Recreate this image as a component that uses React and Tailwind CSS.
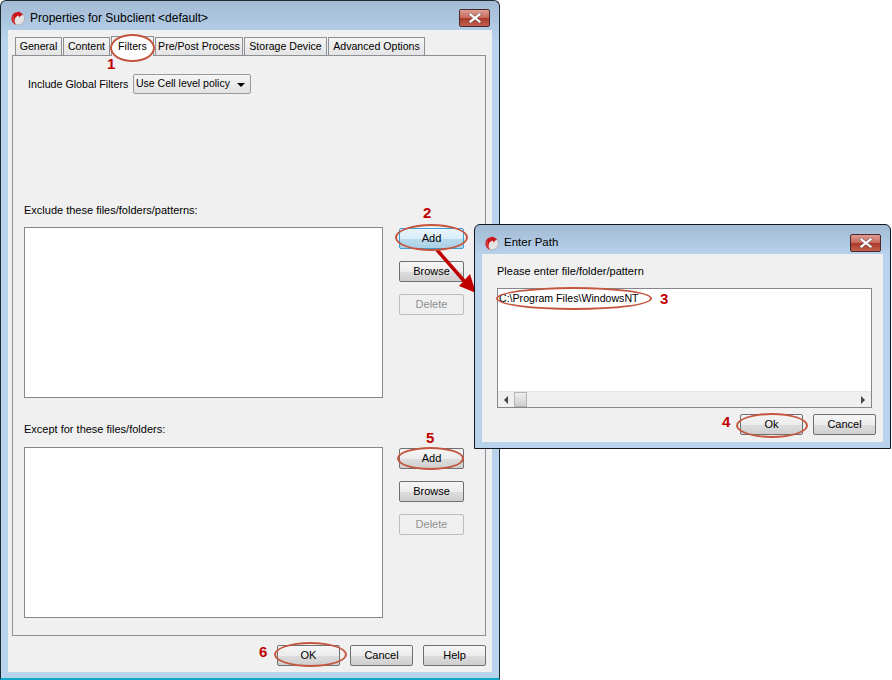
const font = { fontFamily: '"Liberation Sans", sans-serif' };

function Logo({ className }) {
  return (
    <svg viewBox="0 0 16 16" className={className}>
      <circle cx="8" cy="8.5" r="6.5" fill="#e4e4e4" stroke="#9a9a9a" strokeWidth="0.6" />
      <path d="M8 2 A6.5 6.5 0 0 0 6 14.7 C3.5 11 4.5 6.5 9 5.5 L9 7.5 L13 4.2 L9 1.8 Z" fill="#c8141c" />
      <path d="M3 6 C3 8 3 11 5 13" stroke="#e85a50" strokeWidth="1" fill="none" />
    </svg>
  );
}

function CloseButton() {
  return (
    <div className="w-[31px] h-[18px] rounded-[2px] border border-[#4a2a28] bg-[linear-gradient(to_bottom,#dc9d93_0%,#c9695c_48%,#a93a2c_52%,#c4604f_100%)] flex items-center justify-center">
      <svg viewBox="0 0 14 10" className="w-[14px] h-[10px]">
        <path d="M2.5 1.5 L11.5 8.5 M11.5 1.5 L2.5 8.5" stroke="#50504f" strokeWidth="3.4" strokeLinecap="square" opacity="0.6" />
        <path d="M2.5 1.5 L11.5 8.5 M11.5 1.5 L2.5 8.5" stroke="#ffffff" strokeWidth="2.2" strokeLinecap="square" />
      </svg>
    </div>
  );
}

function Button({ children, disabled, focused, className = "" }) {
  return (
    <div
      className={`h-[21px] rounded-[2px] border flex items-center justify-center text-[11px] ${
        disabled
          ? "border-[#bdbdbd] bg-[#f0f0f0] text-[#8f8f8f]"
          : focused
          ? "border-[#3c9fd6] bg-[linear-gradient(to_bottom,#eaf6fc_0%,#d8edf8_50%,#bcdcee_52%,#a9d0e6_100%)] text-black"
          : "border-[#707070] bg-[linear-gradient(to_bottom,#f5f5f5_0%,#ececec_50%,#dcdcdc_55%,#cfcfcf_100%)] text-black"
      } ${className}`}
    >
      {children}
    </div>
  );
}

function Tab({ children, width, active }) {
  return (
    <div
      className={`border border-b-0 border-[#8e8f94] flex items-center justify-center text-[10.6px] whitespace-nowrap text-black ${
        active ? "relative z-10 h-[20px] bg-[#f0f0f0] -mb-px" : "h-[18px] bg-[linear-gradient(to_bottom,#f4f4f4,#e4e4e4)]"
      } ${width}`}
    >
      {active && <div className="absolute left-[-2px] top-[-3px] w-[45px] h-[28px] rounded-[50%] border-2 border-[#c4563f] bg-white" />}
      <span className="relative">{children}</span>
    </div>
  );
}

function ListRow({ label, top, bottom, focused }) {
  return (
    <div>
      <div className={`h-4 leading-4 text-[11px] text-black ${top}`}>{label}</div>
      <div className={`flex gap-4 ${bottom}`}>
        <div className="w-[359px] h-[171px] bg-white border border-[#85878c]" />
        <div className="w-[65px] flex flex-col gap-3 mt-px">
          <Button focused={focused}>Add</Button>
          <Button>Browse</Button>
          <Button disabled>Delete</Button>
        </div>
      </div>
    </div>
  );
}

function Ellipse({ className }) {
  return <div className={`absolute rounded-[50%] border-2 border-[#c4563f] ${className}`} />;
}

function Num({ children, className }) {
  return <div className={`absolute text-[15px] leading-[18px] font-bold text-[#c00000] ${className}`}>{children}</div>;
}

export default function App() {
  return (
    <div className="relative w-[892px] h-[680px] bg-white overflow-hidden" style={font}>
      {/* Properties window */}
      <div className="w-[500px] h-[680px] flex flex-col border border-[#1c2a33] border-b-2 border-b-[#10a8c8] rounded-t-md bg-[linear-gradient(to_bottom,#a3bbd4_0%,#b9d3ec_6%,#b9d3ec_100%)]">
        <div className="h-[29px] flex items-center pl-[9px] pr-[9px] pt-[5px]">
          <Logo className="w-4 h-4" />
          <div className="ml-[4px] text-[12px] text-black flex-1">{"Properties for Subclient <default>"}</div>
          <CloseButton />
        </div>
        <div className="ml-[7px] mr-[7px] mb-[6px] flex-1 bg-[#f0f0f0] pl-[4px] pr-[6px] flex flex-col">
          <div className="h-[25px] pl-[3px] flex items-end gap-px">
            <Tab width="w-[47px]">General</Tab>
            <Tab width="w-[47px]">Content</Tab>
            <Tab width="w-[43px]" active>Filters</Tab>
            <Tab width="w-[88px]">Pre/Post Process</Tab>
            <Tab width="w-[83px]">Storage Device</Tab>
            <Tab width="w-[97px]">Advanced Options</Tab>
          </div>
          <div className="h-[581px] border border-[#8e8f94] pl-[11px]">
            <div className="mt-[18px] pl-[4px] flex items-center gap-[5px] h-[20px]">
              <span className="w-[100px] text-[10.7px] text-black whitespace-nowrap">Include Global Filters</span>
              <div className="w-[118px] h-[20px] border border-[#9a9a9a] rounded-[2px] bg-[linear-gradient(to_bottom,#f5f5f5,#e2e2e2)] flex items-center pl-[2px] pr-[5px] text-[10.5px] text-black whitespace-nowrap">
                <span className="flex-1">Use Cell level policy</span>
                <span className="w-0 h-0 border-x-[4px] border-x-transparent border-t-[4px] border-t-black mt-[2px]" />
              </div>
            </div>
            <ListRow label="Exclude these files/folders/patterns:" top="mt-[108px]" bottom="mt-[9px]" focused />
            <ListRow label="Except for these files/folders:" top="mt-[23px]" bottom="mt-[10px]" />
          </div>
          <div className="mt-[9px] flex justify-end gap-[10px]">
            <Button className="w-[63px]">OK</Button>
            <Button className="w-[63px]">Cancel</Button>
            <Button className="w-[63px]">Help</Button>
          </div>
        </div>
      </div>

      {/* arrow from Add runs under the dialog */}
      <svg className="absolute left-[430px] top-[245px] w-[50px] h-[55px]" viewBox="0 0 50 55">
        <path d="M7 5 L35 37" stroke="#c00000" strokeWidth="3.5" />
        <path d="M46 48 L29 41 L40 29 Z" fill="#c00000" />
      </svg>

      {/* Enter Path dialog */}
      <div className="absolute left-[474px] top-[224px] w-[417px] h-[225px] flex flex-col border border-[#10181f] rounded-t-md bg-[linear-gradient(to_bottom,#a3bbd4_0%,#b9d3ec_14%,#b9d3ec_100%)] z-10">
        <div className="h-[29px] flex items-center pl-[9px] pr-[9px] pt-[6px]">
          <Logo className="w-4 h-4" />
          <div className="ml-[4px] text-[11.5px] text-black flex-1">Enter Path</div>
          <CloseButton />
        </div>
        <div className="mx-[7px] mb-[6px] flex-1 bg-[#f0f0f0] pl-[15px] flex flex-col">
          <div className="mt-[9px] h-4 leading-4 text-[11px] text-black">Please enter file/folder/pattern</div>
          <div className="mt-[9px] w-[375px] h-[120px] border border-[#85878c] bg-white flex flex-col">
            <div className="flex-1 pl-[1px] pt-[1px] text-[10.6px] leading-4 text-black">C:\Program Files\WindowsNT</div>
            <div className="h-[16px] bg-[#efefef] border-t border-[#e4e4e4] flex items-center pl-[6px] pr-[6px]">
              <span className="w-0 h-0 border-y-[4px] border-y-transparent border-r-[4px] border-r-[#444]" />
              <div className="ml-[6px] w-[13px] h-[15px] border border-[#b4b4b4] bg-[linear-gradient(to_bottom,#eeeeee,#cfcfcf)]" />
              <div className="flex-1" />
              <span className="w-0 h-0 border-y-[4px] border-y-transparent border-l-[4px] border-l-[#444]" />
            </div>
          </div>
          <div className="mt-[6px] flex justify-end gap-[10px] pr-[7px]">
            <Button className="w-[63px]">Ok</Button>
            <Button className="w-[63px]">Cancel</Button>
          </div>
        </div>
      </div>

      {/* Callouts */}
      <div className="absolute inset-0 z-20">
        <Ellipse className="left-[395px] top-[224px] w-[73px] h-[27px]" />
        <Ellipse className="left-[496px] top-[287px] w-[156px] h-[23px]" />
        <Ellipse className="left-[736px] top-[413px] w-[72px] h-[25px]" />
        <Ellipse className="left-[397px] top-[447px] w-[67px] h-[23px]" />
        <Ellipse className="left-[274px] top-[642px] w-[73px] h-[25px]" />
        <Num className="left-[107px] top-[55px]">1</Num>
        <Num className="left-[423px] top-[204px]">2</Num>
        <Num className="left-[660px] top-[290px]">3</Num>
        <Num className="left-[722px] top-[413px]">4</Num>
        <Num className="left-[426px] top-[429px]">5</Num>
        <Num className="left-[259px] top-[643px]">6</Num>
      </div>
    </div>
  );
}
